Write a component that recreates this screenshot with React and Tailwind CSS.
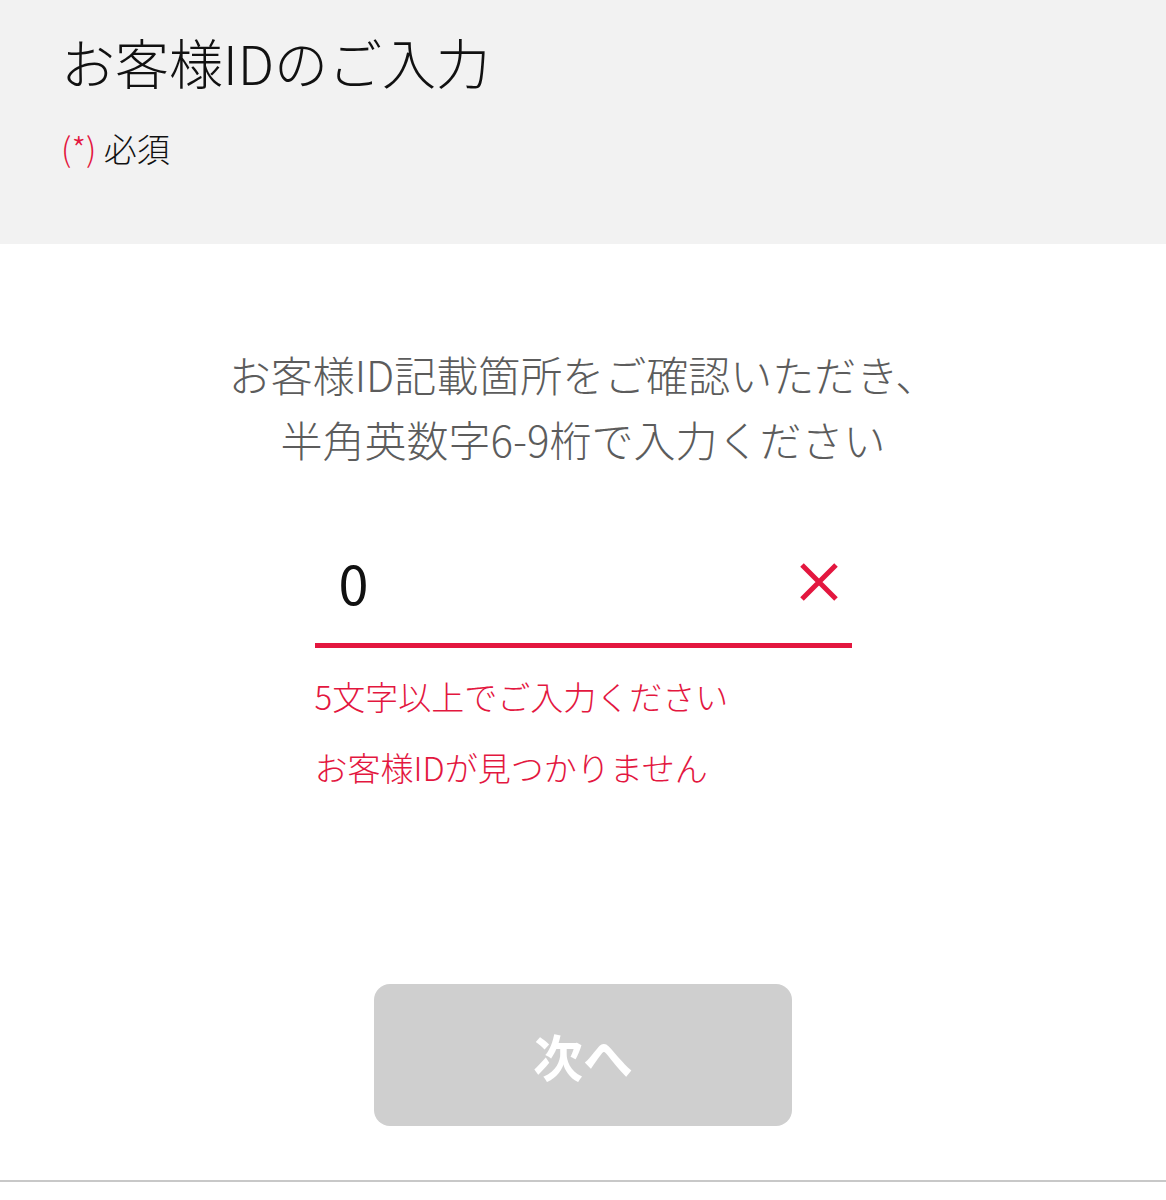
import React from "react";

const font = { fontFamily: '"Noto Sans CJK JP", "Noto Sans", sans-serif' };

const App = () => {
  return (
    <div className="min-h-[1200px] bg-white font-light text-[#111]" style={font}>
      <header className="h-[244px] bg-[#f2f2f2] pl-[61px] pt-[31px]">
        <h1 className="text-[54px] leading-[62px] font-light">お客様IDのご入力</h1>
        <p className="mt-[35px] text-[33px] leading-[40px]">
          <span className="text-[#e3173f]">(*)</span> 必須
        </p>
      </header>

      <main className="pt-[97px]">
        <p className="text-center text-[42px] leading-[65px] text-[#5c5c5c]">
          お客様ID記載箇所をご確認いただき、
          <br />
          半角英数字6-9桁で入力ください
        </p>

        <div className="mx-auto mt-[72px] w-[537px]">
          <div className="flex h-[105px] items-center justify-between border-b-[5px] border-[#e3173f] pb-[22px] pl-[24px] pr-[13px]">
            <span className="text-[54px] leading-none font-normal">0</span>
            <svg width="40" height="40" viewBox="0 0 40 40" aria-label="clear">
              <path d="M3 3 L37 37 M37 3 L3 37" stroke="#e3173f" strokeWidth="5" fill="none" />
            </svg>
          </div>
          <div className="mt-[13px] text-[33px] leading-[71px] text-[#e3173f]">
            <p>5文字以上でご入力ください</p>
            <p>お客様IDが見つかりません</p>
          </div>
        </div>

        <button
          type="button"
          disabled
          className="mx-auto mt-[181px] flex h-[142px] w-[418px] items-center justify-center rounded-[16px] bg-[#cfcfcf] text-[50px] font-bold text-white"
        >
          次へ
        </button>

        <div className="mt-[54px] border-t-2 border-[#c8c8c8]" />
      </main>
    </div>
  );
};

export default App;
